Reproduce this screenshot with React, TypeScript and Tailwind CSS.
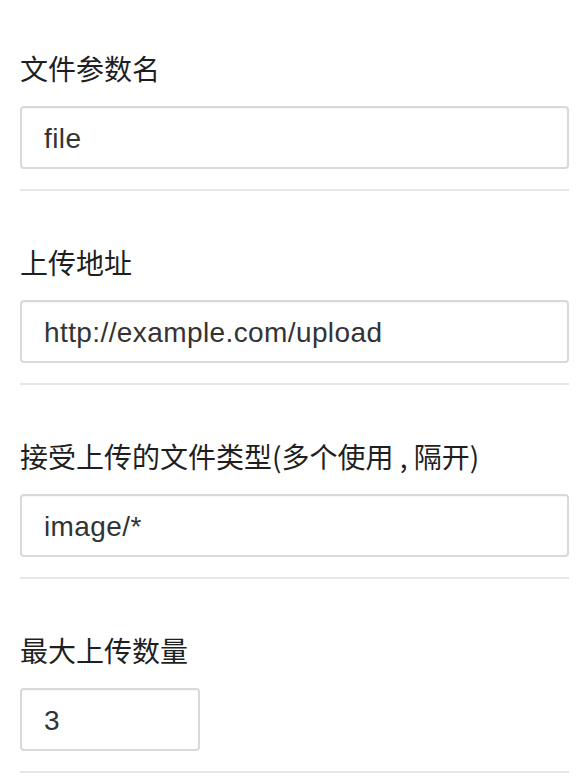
import { useState } from 'react'

const fields = [
  { key: 'name', label: '文件参数名', value: 'file', small: false },
  { key: 'action', label: '上传地址', value: 'http://example.com/upload', small: false },
  { key: 'accept', label: '接受上传的文件类型(多个使用 , 隔开)', value: 'image/*', small: false },
  { key: 'max', label: '最大上传数量', value: '3', small: true },
]

export default function App() {
  const [form, setForm] = useState<Record<string, string>>(
    Object.fromEntries(fields.map(f => [f.key, f.value]))
  )

  return (
    <div className="bg-white min-h-screen pl-[20px] pr-[13px] font-['Liberation_Sans','Noto_Sans_CJK_SC',sans-serif] text-[#333]">
      {fields.map(f => (
        <div key={f.key} className="pt-[51px] first:pt-[48px] pb-[20px] border-b-2 border-[#e6e6e6]">
          <label className="block text-[28px] leading-[40px] text-[#1f1f1f] font-['Noto_Sans_CJK_SC',sans-serif]">
            {f.label}
          </label>
          <input
            value={form[f.key]}
            onChange={e => setForm(p => ({ ...p, [f.key]: e.target.value }))}
            className={`${f.small ? 'w-[180px]' : 'w-full'} mt-[18px] h-[63px] px-[22px] pt-[2px] border-2 border-[#d9d9d9] rounded-[4px] text-[28px] tracking-[0.4px] text-[#333] bg-white outline-none shadow-[inset_0_1px_1px_rgba(0,0,0,0.04)] font-['Liberation_Sans',sans-serif]`}
          />
        </div>
      ))}
    </div>
  )
}
